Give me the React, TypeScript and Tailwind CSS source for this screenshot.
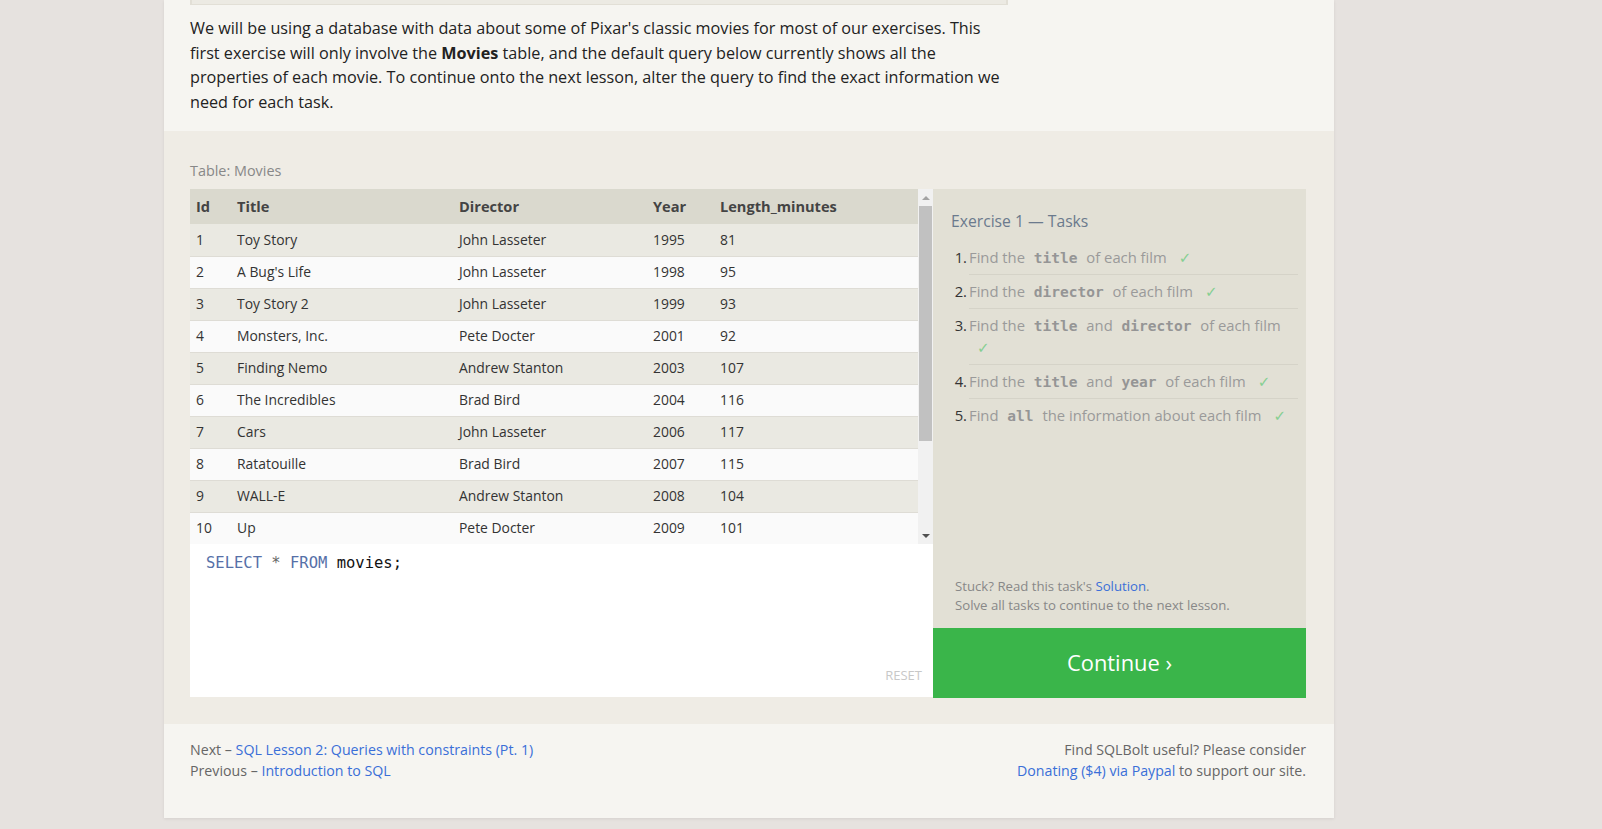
import React from "react";

const rows = [
  ["1", "Toy Story", "John Lasseter", "1995", "81"],
  ["2", "A Bug's Life", "John Lasseter", "1998", "95"],
  ["3", "Toy Story 2", "John Lasseter", "1999", "93"],
  ["4", "Monsters, Inc.", "Pete Docter", "2001", "92"],
  ["5", "Finding Nemo", "Andrew Stanton", "2003", "107"],
  ["6", "The Incredibles", "Brad Bird", "2004", "116"],
  ["7", "Cars", "John Lasseter", "2006", "117"],
  ["8", "Ratatouille", "Brad Bird", "2007", "115"],
  ["9", "WALL-E", "Andrew Stanton", "2008", "104"],
  ["10", "Up", "Pete Docter", "2009", "101"],
];

function Code({ children }: { children: React.ReactNode }) {
  return (
    <code className="font-['DejaVu_Sans_Mono',monospace] font-bold text-[14.5px] text-[#959595] px-[5px]">
      {children}
    </code>
  );
}

function Check({ block }: { block?: boolean }) {
  return block ? (
    <div className="text-[#86cf92] ml-[8px] font-['DejaVu_Sans',sans-serif] text-[15px]">✓</div>
  ) : (
    <span className="text-[#86cf92] ml-[12px] font-['DejaVu_Sans',sans-serif] text-[15px]">✓</span>
  );
}

function Task({ n, children, last }: { n: number; children: React.ReactNode; last?: boolean }) {
  return (
    <li className="flex">
      <span className="w-[18px] shrink-0 text-right pr-[2px] py-[5px] leading-[22px] text-[#333]">{n}.</span>
      <div
        className={`w-[329px] py-[5px] leading-[22px] text-[#9a9a9a] ${last ? "" : "border-b border-[#d5d3c8]"}`}
      >
        {children}
      </div>
    </li>
  );
}

export default function App() {
  return (
    <div className="min-h-screen bg-[#e6e2df] font-['Open_Sans',sans-serif]">
      <div className="ml-[164px] w-[1170px] bg-[#f6f5f1] shadow-[0_1px_3px_rgba(0,0,0,0.08)]">
        {/* Intro */}
        <div className="px-[26px] pb-[17px]">
          <div className="w-[818px] h-[5px] bg-[#eceae3] border-l-2 border-r-2 border-b border-[#e2dfd6]" />
          <p className="mt-[11px] w-[818px] text-[16.2px] leading-[24.5px] text-[#222]">
            We will be using a database with data about some of Pixar's classic movies for most of our exercises. This
            first exercise will only involve the <b className="font-bold">Movies</b> table, and the default query below
            currently shows all the properties of each movie. To continue onto the next lesson, alter the query to find
            the exact information we need for each task.
          </p>
        </div>

        {/* Exercise */}
        <div className="bg-[#efece5] pl-[26px] pr-[28px] pt-[30px] pb-[26px]">
          <div className="text-[14.4px] leading-[20px] text-[#888] mb-[8px]">Table: Movies</div>
          <div className="flex">
            {/* Left: table + editor */}
            <div className="w-[743px] flex flex-col">
              <div className="flex h-[355px]">
                <div className="w-[728px] flex flex-col">
                  <div className="flex h-[35px] items-center bg-[#dad9ce] text-[14.6px] font-bold text-[#444]">
                    <div className="w-[41px] pl-[6px]">Id</div>
                    <div className="w-[222px] pl-[6px]">Title</div>
                    <div className="w-[194px] pl-[6px]">Director</div>
                    <div className="w-[67px] pl-[6px]">Year</div>
                    <div className="flex-1 pl-[6px]">Length_minutes</div>
                  </div>
                  {rows.map((r, i) => (
                    <div
                      key={r[0]}
                      className={`flex h-[32px] items-center text-[13.9px] text-[#333] ${
                        i === 0 ? "" : "border-t border-[#dedcd5]"
                      } ${i % 2 === 0 ? "bg-[#eae9e2]" : "bg-[#fafafa]"}`}
                    >
                      <div className="w-[41px] pl-[6px]">{r[0]}</div>
                      <div className="w-[222px] pl-[6px]">{r[1]}</div>
                      <div className="w-[194px] pl-[6px]">{r[2]}</div>
                      <div className="w-[67px] pl-[6px]">{r[3]}</div>
                      <div className="flex-1 pl-[6px]">{r[4]}</div>
                    </div>
                  ))}
                </div>
                {/* scrollbar */}
                <div className="w-[15px] bg-[#f1f1f1] flex flex-col items-center">
                  <div className="h-[17px] w-full flex items-center justify-center">
                    <div className="w-0 h-0 border-l-[4px] border-r-[4px] border-b-[4px] border-l-transparent border-r-transparent border-b-[#a3a3a3]" />
                  </div>
                  <div className="w-[13px] h-[235px] bg-[#c1c1c1]" />
                  <div className="flex-1" />
                  <div className="h-[17px] w-full flex items-center justify-center">
                    <div className="w-0 h-0 border-l-[4px] border-r-[4px] border-t-[4px] border-l-transparent border-r-transparent border-t-[#505050]" />
                  </div>
                </div>
              </div>
              <div className="h-[153px] bg-white flex flex-col px-[16px] pt-[9px] pb-[12px]">
                <div className="font-['DejaVu_Sans_Mono',monospace] text-[15.5px] leading-[20px]">
                  <span className="text-[#5670a8]">SELECT</span> <span className="text-[#666]">*</span>{" "}
                  <span className="text-[#5670a8]">FROM</span> <span className="text-[#111]">movies;</span>
                </div>
                <div className="mt-auto self-end text-[13px] text-[#c8c8c8] mr-[-5px]">RESET</div>
              </div>
            </div>

            {/* Right: tasks */}
            <div className="w-[373px] flex flex-col">
              <div className="h-[439px] bg-[#e2e0d5] flex flex-col pt-[20px] pb-[14px]">
                <div className="pl-[18px] text-[15.7px] leading-[24px] text-[#6b7a8d]">Exercise 1 — Tasks</div>
                <ol className="mt-[8px] pl-[18px] text-[14.8px]">
                  <Task n={1}>
                    <span className="whitespace-nowrap">
                      Find the <Code>title</Code> of each film
                      <Check />
                    </span>
                  </Task>
                  <Task n={2}>
                    <span className="whitespace-nowrap">
                      Find the <Code>director</Code> of each film
                      <Check />
                    </span>
                  </Task>
                  <Task n={3}>
                    <span className="whitespace-nowrap">
                      Find the <Code>title</Code> and <Code>director</Code> of each film
                    </span>
                    <Check block />
                  </Task>
                  <Task n={4}>
                    <span className="whitespace-nowrap">
                      Find the <Code>title</Code> and <Code>year</Code> of each film
                      <Check />
                    </span>
                  </Task>
                  <Task n={5} last>
                    <span className="whitespace-nowrap">
                      Find <Code>all</Code> the information about each film
                      <Check />
                    </span>
                  </Task>
                </ol>
                <div className="mt-auto pl-[22px] text-[13.2px] leading-[18.5px] text-[#888]">
                  <div>
                    Stuck? Read this task's <span className="text-[#3a6fd8]">Solution</span>.
                  </div>
                  <div>Solve all tasks to continue to the next lesson.</div>
                </div>
              </div>
              <div className="h-[70px] bg-[#3ab54a] flex items-center justify-center text-white text-[21.9px]">
                Continue ›
              </div>
            </div>
          </div>
        </div>

        {/* Footer */}
        <div className="pl-[26px] pr-[28px] pt-[15px] pb-[37px] flex justify-between text-[14.2px] leading-[21px] text-[#666]">
          <div>
            <div>
              Next – <span className="text-[#3a6fd8]">SQL Lesson 2: Queries with constraints (Pt. 1)</span>
            </div>
            <div>
              Previous – <span className="text-[#3a6fd8]">Introduction to SQL</span>
            </div>
          </div>
          <div className="text-right">
            <div>Find SQLBolt useful? Please consider</div>
            <div>
              <span className="text-[#3a6fd8]">Donating ($4) via Paypal</span> to support our site.
            </div>
          </div>
        </div>
      </div>
    </div>
  );
}
